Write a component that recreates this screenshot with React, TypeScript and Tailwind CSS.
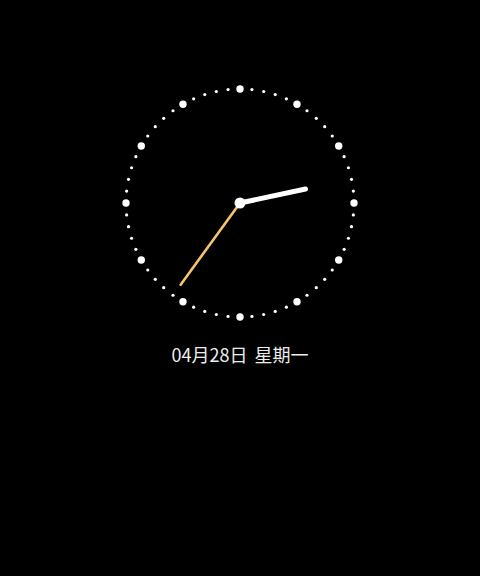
import React from 'react';

const R = 114;
const C = 120;

function ClockFace() {
  const ticks = Array.from({ length: 60 }, (_, i) => {
    const a = (i * 6 * Math.PI) / 180;
    const big = i % 5 === 0;
    return (
      <circle
        key={i}
        cx={C + R * Math.sin(a)}
        cy={C - R * Math.cos(a)}
        r={big ? 3.7 : 1.6}
        fill="#ffffff"
      />
    );
  });

  // 2:36
  const hourA = ((2 + 36 / 60) * 30 * Math.PI) / 180;
  const minA = (36 * 6 * Math.PI) / 180;

  return (
    <svg width={240} height={240} viewBox="0 0 240 240">
      {ticks}
      <line
        x1={C}
        y1={C}
        x2={C + 101 * Math.sin(minA)}
        y2={C - 101 * Math.cos(minA)}
        stroke="#f6c470"
        strokeWidth={2.6}
        strokeLinecap="round"
      />
      <line
        x1={C}
        y1={C}
        x2={C + 67 * Math.sin(hourA)}
        y2={C - 67 * Math.cos(hourA)}
        stroke="#ffffff"
        strokeWidth={5}
        strokeLinecap="round"
      />
      <circle cx={C} cy={C} r={5.5} fill="#ffffff" />
    </svg>
  );
}

export default function App() {
  return (
    <div className="w-[480px] h-[576px] bg-black flex flex-col items-center pt-[83px]">
      <ClockFace />
      <div
        className="mt-[19px] flex gap-[7px] text-[18px] leading-[24px] text-[#ececec]"
        style={{ fontFamily: '"Noto Sans CJK SC", "Noto Sans", sans-serif' }}
      >
        <span>04月28日</span>
        <span>星期一</span>
      </div>
    </div>
  );
}
